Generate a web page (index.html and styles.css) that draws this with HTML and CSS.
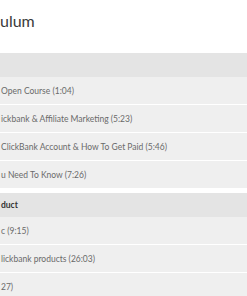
FILE: index.html
```html
<!DOCTYPE html>
<html lang="en">
<head>
<meta charset="utf-8">
<title>Curriculum</title>
<link rel="stylesheet" href="styles.css">
</head>
<body>
<main class="curriculum">
  <h2 class="curriculum-title">ulum</h2>

  <section class="module">
    <div class="module-head"></div>
    <ul class="lessons">
      <li class="lesson">Open Course (1:04)</li>
      <li class="lesson">ickbank &amp; Affiliate Marketing (5:23)</li>
      <li class="lesson">ClickBank Account &amp; How To Get Paid (5:46)</li>
      <li class="lesson">u Need To Know (7:26)</li>
    </ul>
  </section>

  <section class="module">
    <div class="module-head">duct</div>
    <ul class="lessons">
      <li class="lesson">c (9:15)</li>
      <li class="lesson">lickbank products (26:03)</li>
      <li class="lesson">27)</li>
    </ul>
  </section>
</main>
</body>
</html>
```

FILE: styles.css
```css
html, body {
  margin: 0;
  padding: 0;
  background: #ffffff;
}

.curriculum {
  font-family: Lato, "Open Sans", sans-serif;
  color: #6a6a6a;
  display: flex;
  flex-direction: column;
  gap: 5px;
}

.curriculum-title {
  margin: 0;
  height: 48px;
  box-sizing: border-box;
  padding-top: 11px;
  font-size: 16px;
  font-weight: 400;
  line-height: 20px;
  color: #3a3a3a;
}

.module {
  display: flex;
  flex-direction: column;
}

.module-head {
  height: 24px;
  background: #e4e4e4;
  display: flex;
  align-items: center;
  padding-left: 1px;
  font-size: 8.5px;
  font-weight: 700;
  color: #333333;
}

.lessons {
  list-style: none;
  margin: 0;
  padding: 0;
  display: flex;
  flex-direction: column;
  gap: 1px;
}

.lesson {
  height: 27px;
  background: #efefef;
  display: flex;
  align-items: center;
  padding-left: 1px;
  font-size: 8.5px;
  color: #6a6a6a;
  white-space: nowrap;
}
```
